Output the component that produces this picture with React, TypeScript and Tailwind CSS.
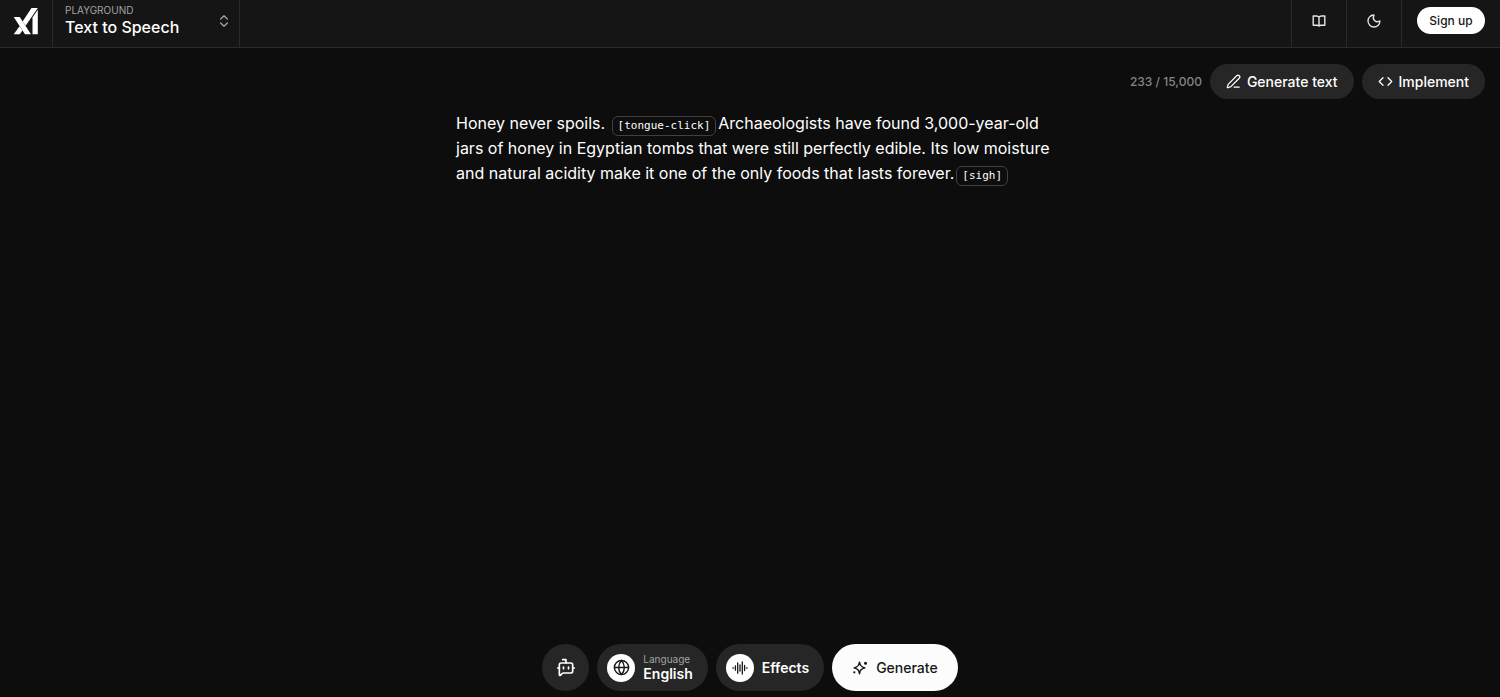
import { useState } from "react";
import type { ReactNode } from "react";
import { BotMessageSquare, ChevronsUpDown, Code, Globe, Moon, PenLine } from "lucide-react";

const MAX_CHARS = 15000;

export default function App() {
  const [charCount] = useState(233);

  return (
    <div className="flex flex-col min-h-screen bg-[#0d0d0d] text-white font-['Inter',sans-serif]">
      <Header />

      <main className="flex flex-col flex-1">
        {/* Toolbar */}
        <div className="flex items-center justify-end gap-2 px-[15px] pt-4">
          <span className="text-[12px] font-medium text-[#858585]">
            {charCount} / {MAX_CHARS.toLocaleString("en-US")}
          </span>
          <PillButton icon={<PenLine size={15} />}>Generate text</PillButton>
          <PillButton icon={<Code size={15} />}>Implement</PillButton>
        </div>

        {/* Script */}
        <div className="w-full max-w-[612px] mx-auto pl-3 mt-3 flex-1">
          <p className="text-[16px] leading-[25px]">
            Honey never spoils. <Tag>[tongue-click]</Tag>Archaeologists have found 3,000-year-old
            jars of honey in Egyptian tombs that were still perfectly edible. Its low moisture and
            natural acidity make it one of the only foods that lasts forever.
            <Tag>[sigh]</Tag>
          </p>
        </div>

        {/* Voice controls */}
        <div className="flex items-center justify-center gap-2 pb-[6px]">
          <button
            aria-label="Voice"
            className="flex items-center justify-center size-[47px] rounded-full bg-[#262626]"
          >
            <BotMessageSquare size={20} />
          </button>
          <button className="flex items-center gap-2 h-[47px] pl-[10px] pr-[15px] rounded-full bg-[#262626] text-left">
            <IconDisc>
              <Globe size={17} />
            </IconDisc>
            <span className="flex flex-col pb-[2px]">
              <span className="text-[10px] leading-[14px] text-[#a3a3a3]">Language</span>
              <span className="text-[14px] leading-4 font-semibold">English</span>
            </span>
          </button>
          <button className="flex items-center gap-2 h-[47px] pl-[10px] pr-[15px] rounded-full bg-[#262626]">
            <IconDisc>
              <WaveIcon />
            </IconDisc>
            <span className="text-[14px] font-semibold">Effects</span>
          </button>
          <button className="flex items-center gap-2 h-[47px] px-5 rounded-full bg-[#fcfcfc] text-[#171717]">
            <SparkleIcon />
            <span className="text-[14px] font-medium">Generate</span>
          </button>
        </div>
      </main>
    </div>
  );
}

function Header() {
  return (
    <header className="flex items-stretch h-12 bg-[#151515] border-b border-[#2a2a2a]">
      <a
        href="#"
        aria-label="Home"
        className="flex justify-center w-[53px] pt-[7px] border-r border-[#2a2a2a]"
      >
        <Logo />
      </a>
      <button className="flex items-start justify-between w-[187px] pl-3 pr-[7px] border-r border-[#2a2a2a] text-left">
        <span className="flex flex-col pt-1">
          <span className="text-[10px] leading-3 text-[#a3a3a3]">PLAYGROUND</span>
          <span className="text-[16px] leading-[22px] font-medium">Text to Speech</span>
        </span>
        <ChevronsUpDown size={16} className="mt-[13px] text-[#a3a3a3]" />
      </button>

      <div className="flex ml-auto">
        <HeaderButton label="Documentation">
          <BookIcon />
        </HeaderButton>
        <HeaderButton label="Toggle theme">
          <Moon size={16} />
        </HeaderButton>
        <div className="px-[15px] pt-[7px] border-l border-[#2a2a2a]">
          <a
            href="#"
            className="flex items-center justify-center h-[27px] w-[68px] rounded-full bg-white text-[12px] font-medium text-[#171717]"
          >
            Sign up
          </a>
        </div>
      </div>
    </header>
  );
}

function HeaderButton({ label, children }: { label: string; children: ReactNode }) {
  return (
    <button
      aria-label={label}
      className="flex justify-center w-[55px] pt-[13px] border-l border-[#2a2a2a] text-[#e5e5e5]"
    >
      {children}
    </button>
  );
}

function PillButton({ icon, children }: { icon: ReactNode; children: ReactNode }) {
  return (
    <button className="flex items-center gap-[6px] h-[35px] px-4 rounded-full bg-[#262626] text-[14px] font-medium">
      {icon}
      {children}
    </button>
  );
}

function Tag({ children }: { children: ReactNode }) {
  return (
    <code className="inline-block px-[5px] mx-[2px] rounded-md border border-[#404040] text-[11px] leading-[18px] font-['DejaVu_Sans_Mono',monospace]">
      {children}
    </code>
  );
}

function IconDisc({ children }: { children: ReactNode }) {
  return (
    <span className="flex items-center justify-center size-7 rounded-full bg-white text-[#171717]">
      {children}
    </span>
  );
}

// ── Icons ────────────────────────────────────────────────

function Logo() {
  return (
    <svg width="26" height="28" viewBox="0 0 26 28" fill="currentColor" aria-hidden="true">
      <path d="M.7 10h6L18 27.300h-6z" />
      <path d="M.7 27.300L6.500 19.200l3 4.300-2.800 3.800z" />
      <path d="M9.600 14.500L18.500 1h6.300L12.600 18.800z" />
      <path d="M19.500 10.500l5.300-7.700v24.500h-5.300z" />
    </svg>
  );
}

function BookIcon() {
  return (
    <svg
      width="16"
      height="16"
      viewBox="0 0 16 16"
      fill="none"
      stroke="currentColor"
      strokeWidth="1.4"
      strokeLinejoin="round"
      aria-hidden="true"
    >
      <path d="M8 4.200C7.400 3.300 6.600 3 5.600 3H2.200v9.200h3.900c.9 0 1.500.2 1.900.8.400-.6 1-.8 1.900-.8h3.900V3h-3.400c-1 0-1.800.3-2.400 1.200zM8 4.200V13" />
    </svg>
  );
}

function WaveIcon() {
  return (
    <svg
      width="16"
      height="16"
      viewBox="0 0 16 16"
      fill="none"
      stroke="currentColor"
      strokeWidth="1.300"
      strokeLinecap="round"
      aria-hidden="true"
    >
      <path d="M1.100 7.700v.6M3.400 5.800v4.400M5.700 2.800v10.400M8 5v6M10.300 2v12M12.600 5.500v5M14.900 7.700v.6" />
    </svg>
  );
}

function SparkleIcon() {
  return (
    <svg
      width="16"
      height="16"
      viewBox="0 0 16 16"
      fill="none"
      stroke="currentColor"
      strokeWidth="1.500"
      strokeLinejoin="round"
      aria-hidden="true"
    >
      <path d="M7.500 2.200C8.100 5.800 9.200 7 12.900 7.900 9.200 8.900 8.100 10 7.500 13.700 6.900 10 5.800 8.900 2.100 7.900 5.800 7 6.900 5.800 7.500 2.200z" />
      <circle cx="13.500" cy="3.300" r="1.500" fill="currentColor" stroke="none" />
      <circle cx="2.300" cy="12.300" r="1.100" fill="currentColor" stroke="none" />
    </svg>
  );
}
